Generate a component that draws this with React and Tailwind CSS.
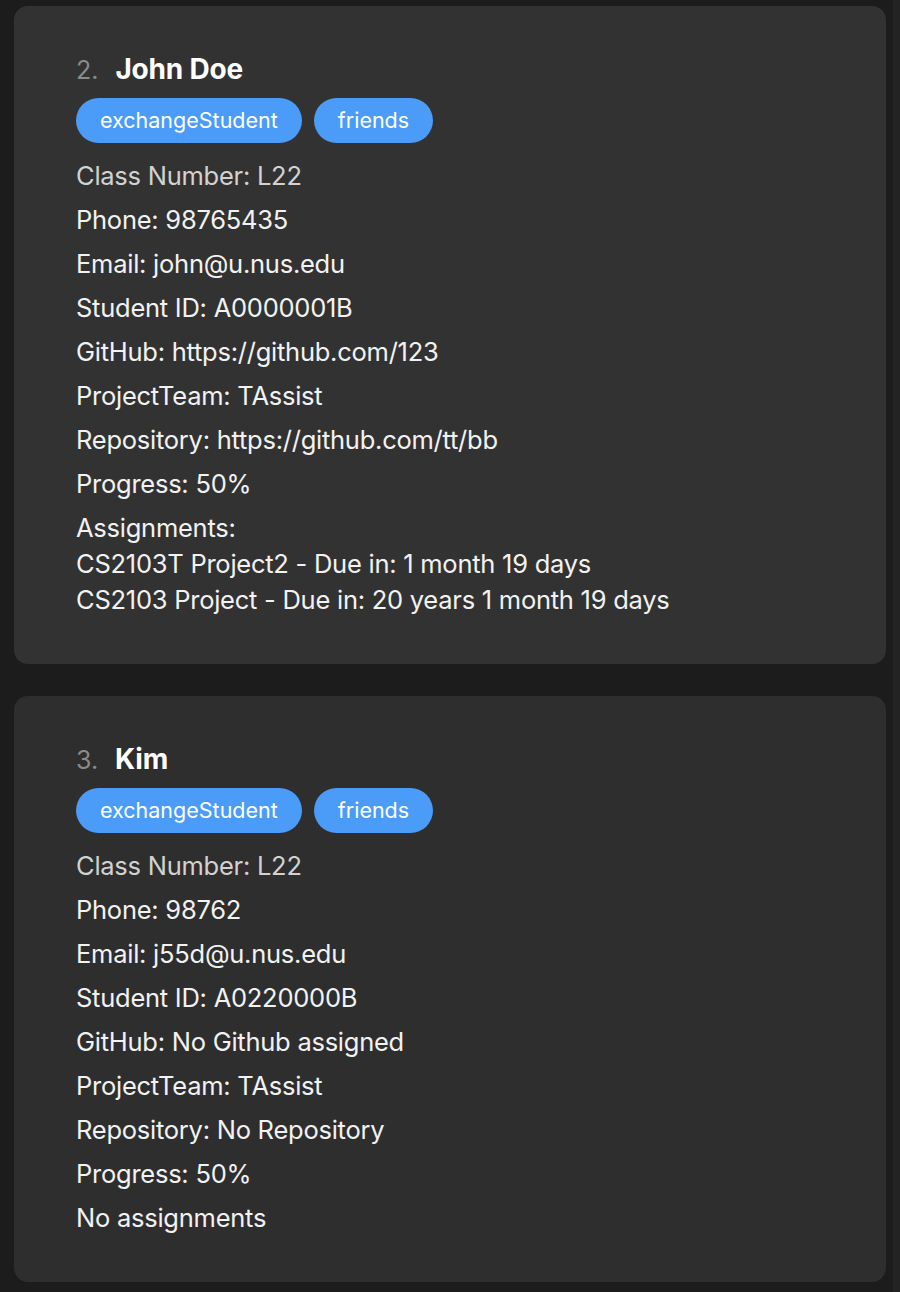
const people = [
  {
    index: 2,
    name: "John Doe",
    tags: ["exchangeStudent", "friends"],
    classNumber: "L22",
    phone: "98765435",
    email: "john@u.nus.edu",
    studentId: "A0000001B",
    github: "https://github.com/123",
    team: "TAssist",
    repo: "https://github.com/tt/bb",
    progress: "50%",
    assignments: [
      "CS2103T Project2 - Due in: 1 month 19 days",
      "CS2103 Project - Due in: 20 years 1 month 19 days",
    ],
    cardBg: "bg-[#323232]",
  },
  {
    index: 3,
    name: "Kim",
    tags: ["exchangeStudent", "friends"],
    classNumber: "L22",
    phone: "98762",
    email: "j55d@u.nus.edu",
    studentId: "A0220000B",
    github: "No Github assigned",
    team: "TAssist",
    repo: "No Repository",
    progress: "50%",
    assignments: [],
    cardBg: "bg-[#2e2e2e]",
  },
];

function PersonCard({ person }) {
  return (
    <div className={`${person.cardBg} rounded-[14px] pl-[62px] pr-6 pt-[41px] pb-[46px]`}>
      {/* Nome */}
      <div className="flex items-baseline h-[44px] leading-[44px]">
        <span className="text-[25px] text-[#8a8a8a] mr-[17px]">{person.index}.</span>
        <span className="text-[28px] font-bold text-white tracking-[-0.2px]">{person.name}</span>
      </div>

      {/* Tags */}
      <div className="flex gap-3 mt-[7px]">
        {person.tags.map((tag) => (
          <span
            key={tag}
            className="h-[45px] px-[24px] rounded-full bg-[#4a9cf8] text-white text-[21.5px] leading-[45px]"
          >
            {tag}
          </span>
        ))}
      </div>

      {/* Detalhes */}
      <div className="mt-[15px] flex flex-col gap-2 text-[25.5px] leading-[36px] tracking-[-0.25px] text-[#f2f2f2]">
        <p className="text-[#d2d2d2]">Class Number: {person.classNumber}</p>
        <p>Phone: {person.phone}</p>
        <p>Email: {person.email}</p>
        <p>Student ID: {person.studentId}</p>
        <p>GitHub: {person.github}</p>
        <p>ProjectTeam: {person.team}</p>
        <p>Repository: {person.repo}</p>
        <p>Progress: {person.progress}</p>
        {person.assignments.length > 0 ? (
          <div>
            <p>Assignments:</p>
            {person.assignments.map((a) => (
              <p key={a}>{a}</p>
            ))}
          </div>
        ) : (
          <p>No assignments</p>
        )}
      </div>
    </div>
  );
}

export default function App() {
  return (
    <div
      className="w-[900px] h-[1292px] bg-[#1c1c1c] flex overflow-hidden"
      style={{ fontFamily: "Inter, 'Noto Sans', sans-serif" }}
    >
      <div className="flex-1 pl-[14px] pr-[7px] pt-[6px] flex flex-col gap-[32px]">
        {people.map((p) => (
          <PersonCard key={p.index} person={p} />
        ))}
      </div>
      <div className="w-[7px] bg-[#232323]" />
    </div>
  );
}
